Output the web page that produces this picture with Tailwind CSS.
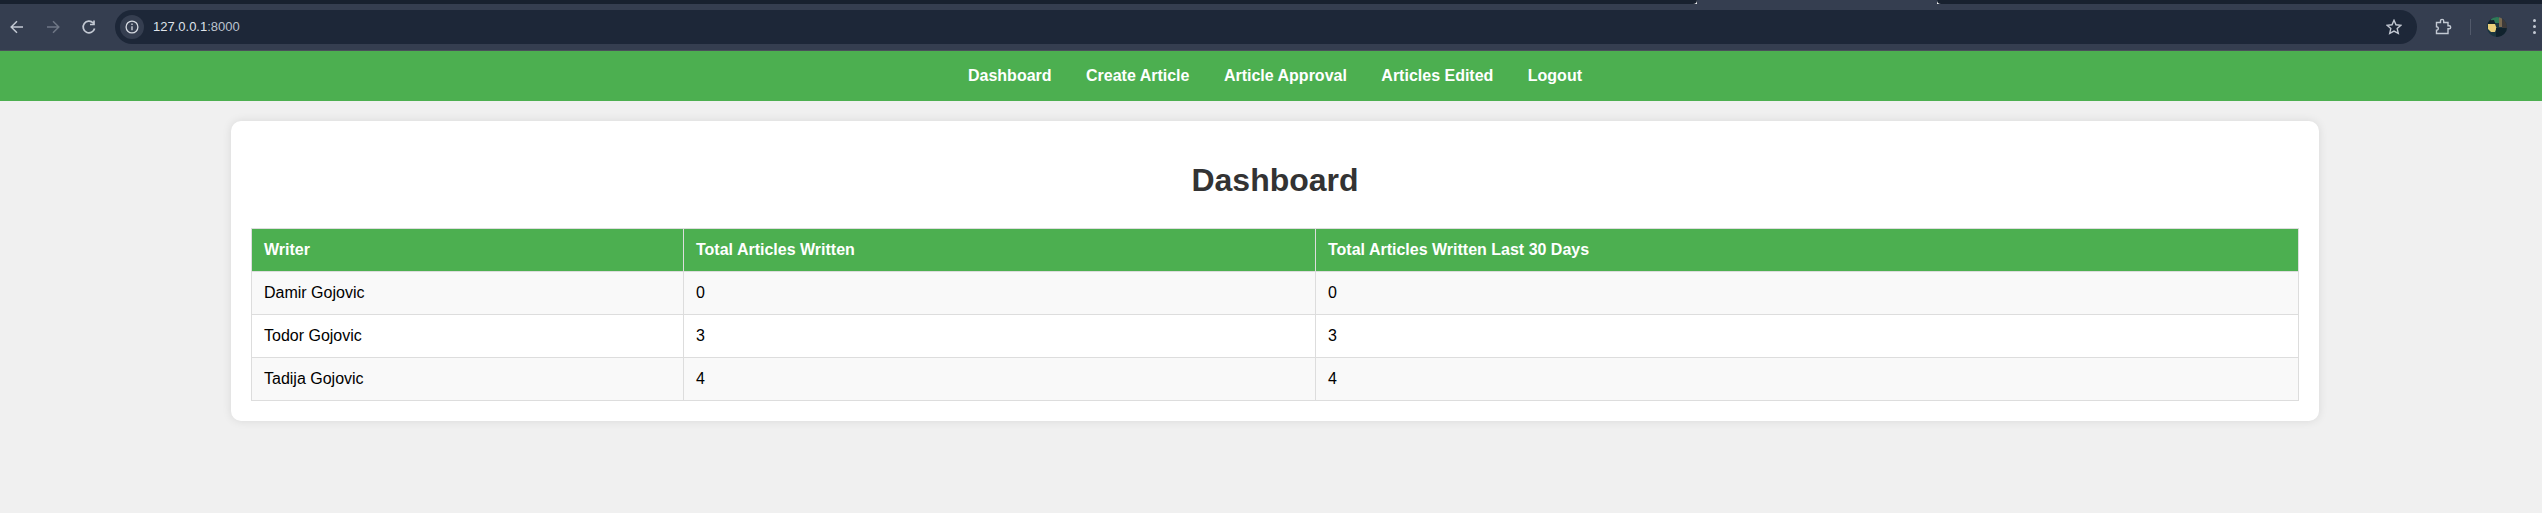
<!DOCTYPE html>
<html lang="en">
<head>
  <meta charset="UTF-8">
  <title>Dashboard</title>
  <script src="https://cdn.jsdelivr.net/npm/@tailwindcss/browser@4"></script>
</head>
<body class="h-[513px] overflow-hidden bg-[#f0f0f0] font-['Liberation_Sans',Arial,sans-serif]">

  <!-- browser chrome -->
  <div class="flex h-1 w-full">
    <div class="w-[1697px] rounded-br-md bg-[#18212f]"></div>
    <div class="w-[240px] bg-[#353e50]"></div>
    <div class="flex-1 rounded-bl-md bg-[#18212f]"></div>
  </div>
  <div class="flex h-[47px] w-full items-center border-b border-[#4a4f5a] bg-[#353e50] pb-[1px]">
    <div class="flex w-[115px] items-center">
      <svg class="ml-[9px] h-4 w-4" viewBox="0 0 16 16" fill="none" stroke="#c3c9d3" stroke-width="1.5"><path d="M14 8H2.500M8 2.200 2.200 8 8 13.800"/></svg>
      <svg class="ml-5 h-4 w-4" viewBox="0 0 16 16" fill="none" stroke="#6f7786" stroke-width="1.5"><path d="M2 8h11.500M8 2.200 13.800 8 8 13.800"/></svg>
      <svg class="ml-5 h-4 w-4" viewBox="0 0 16 16" fill="none" stroke="#c3c9d3" stroke-width="1.7"><path d="M13.600 9.500A5.800 5.800 0 1 1 12.200 4M13 1.500v4H9"/></svg>
    </div>
    <div class="flex h-[34px] w-[2302px] items-center rounded-full bg-[#1d2738] pl-[5px] pr-[15px]">
      <div class="flex h-6 w-6 items-center justify-center rounded-full bg-[#353e50]">
        <svg class="h-[14px] w-[14px]" viewBox="0 0 14 14" fill="none" stroke="#d5d9e0" stroke-width="1.300"><circle cx="7" cy="7" r="5.900"/><path d="M7 6.200v4M7 3.600v1.400"/></svg>
      </div>
      <span class="ml-[9px] text-[13px] text-[#dfe3ea]">127.0.0.1<span class="text-[#bcc3ce]">:8000</span></span>
      <svg class="ml-auto h-4 w-4" viewBox="0 0 16 16" fill="none" stroke="#c3c9d3" stroke-width="1.400"><path d="m8 1.300 2 4.500 4.900.5-3.700 3.300 1.100 4.800L8 12.100l-4.300 2.300 1.100-4.800L1.100 6.300 6 5.800z"/></svg>
    </div>
    <svg class="ml-[18px] h-[18px] w-[18px]" viewBox="0 0 18 18" fill="none" stroke="#c3c9d3" stroke-width="1.400"><path d="M1.500 4.500h4V3a1.600 1.600 0 0 1 3.200 0v1.500h4.300v3.300h1.200a1.500 1.500 0 0 1 0 3h-1.200v4.700H1.500v-3.200a1.800 1.800 0 0 0 0-3.600z"/></svg>
    <div class="ml-[17px] h-4 w-px bg-[#525a6b]"></div>
    <svg class="ml-[16px] h-5 w-5" viewBox="0 0 20 20">
      <clipPath id="avatar"><circle cx="10" cy="10" r="10"/></clipPath>
      <g clip-path="url(#avatar)">
        <rect width="20" height="20" fill="#1a3540"/>
        <path d="M4 0h9v6H4z" fill="#2f7a58"/>
        <path d="M12 0h3v10h-3z" fill="#7a6a50"/>
        <path d="M15 0h5v12h-5z" fill="#3d3a3a"/>
        <path d="M1 7h7l1.500 4-1.500 4H4l-3-3z" fill="#e9cf7a"/>
        <path d="M1 3.500 7 3l1.500 4H0z" fill="#10222c"/>
        <path d="M9 11h11v9H9z" fill="#10222d"/>
      </g>
    </svg>
    <div class="ml-[26px] flex flex-col gap-[3px]">
      <div class="h-[3px] w-[3px] rounded-full bg-[#c3c9d3]"></div>
      <div class="h-[3px] w-[3px] rounded-full bg-[#c3c9d3]"></div>
      <div class="h-[3px] w-[3px] rounded-full bg-[#c3c9d3]"></div>
    </div>
  </div>

  <!-- the page itself is a little wider than the window -->
  <div class="w-[2550px]">
    <nav class="flex h-[50px] items-center justify-center gap-[34.45px] bg-[#4caf50] text-base font-bold text-white">
      <a href="#">Dashboard</a>
      <a href="#">Create Article</a>
      <a href="#">Article Approval</a>
      <a href="#">Articles Edited</a>
      <a href="#">Logout</a>
    </nav>

    <main class="mx-auto mt-5 w-[2088px] rounded-[10px] bg-white p-5 shadow-[0_0_10px_rgba(0,0,0,0.1)]">
      <h1 class="mt-[21px] mb-[29px] text-center text-[32px] leading-[37px] font-bold text-[#333]">Dashboard</h1>
      <table class="w-full table-fixed border-collapse text-left text-base leading-[18px] text-black">
        <thead>
          <tr class="bg-[#4caf50] font-bold text-white">
            <th class="w-[432px] border border-[#ddd] p-3">Writer</th>
            <th class="w-[632px] border border-[#ddd] p-3">Total Articles Written</th>
            <th class="border border-[#ddd] p-3">Total Articles Written Last 30 Days</th>
          </tr>
        </thead>
        <tbody>
          <tr class="bg-[#f9f9f9]">
            <td class="border border-[#ddd] p-3">Damir Gojovic</td>
            <td class="border border-[#ddd] p-3">0</td>
            <td class="border border-[#ddd] p-3">0</td>
          </tr>
          <tr class="bg-white">
            <td class="border border-[#ddd] p-3">Todor Gojovic</td>
            <td class="border border-[#ddd] p-3">3</td>
            <td class="border border-[#ddd] p-3">3</td>
          </tr>
          <tr class="bg-[#f9f9f9]">
            <td class="border border-[#ddd] p-3">Tadija Gojovic</td>
            <td class="border border-[#ddd] p-3">4</td>
            <td class="border border-[#ddd] p-3">4</td>
          </tr>
        </tbody>
      </table>
    </main>
  </div>

</body>
</html>
